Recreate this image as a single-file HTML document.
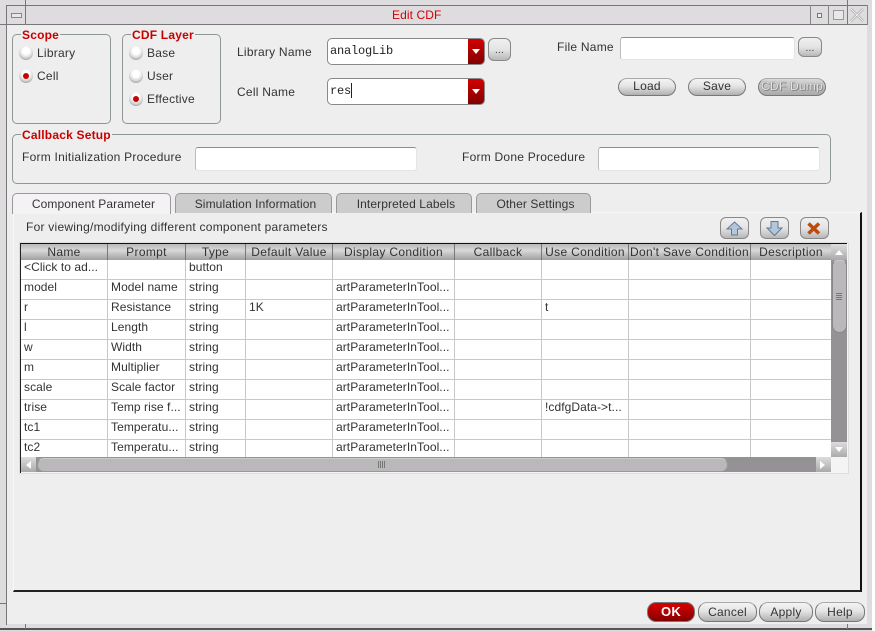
<!DOCTYPE html>
<html><head><meta charset="utf-8"><title>Edit CDF</title>
<style>
*{box-sizing:border-box}
html,body{margin:0;padding:0;background:#fff}
body{width:875px;height:631px;position:relative;overflow:hidden;font:12px "Liberation Sans",sans-serif;color:#333;letter-spacing:.24px}
.a,.t{position:absolute}
.t{white-space:nowrap;line-height:14px}
.grp{position:absolute;border:1px solid #8f9795;border-radius:5px}
.lg{position:absolute;background:#eee;color:#c80000;font-weight:bold;font-size:12px;line-height:14px;padding:0 1px;white-space:nowrap;letter-spacing:.2px}
.in{position:absolute;background:#fff;border:1px solid #e4e4e4;border-top:1px solid #8a8f8d;border-left:1px solid #bbb;border-radius:3px}
.combo{position:absolute;background:#fff;border:1px solid #888;border-radius:5px;overflow:hidden;font:12px "Liberation Mono",monospace;letter-spacing:-.2px;color:#222;line-height:24px;padding-left:2px}
.combo i{position:absolute;right:0;top:0;width:16px;height:100%;background:linear-gradient(#d40000,#800000)}
.combo i:after{content:"";position:absolute;left:4px;top:10px;border:4px solid transparent;border-top:5px solid #fff;border-bottom:0}
.r{position:absolute;width:14px;height:14px;border-radius:50%;background:radial-gradient(circle at 50% 35%,#fff 30%,#d8d8d8 58%,#777 100%)}
.r.on:after{content:"";position:absolute;left:4px;top:4px;width:6px;height:6px;border-radius:50%;background:#c80000}
.b{position:absolute;height:18px;border:1px solid #777;border-top-color:#aaa;border-radius:9px;background:linear-gradient(#f4f4f4,#e4e4e4 45%,#b0b0b0);text-align:center;line-height:15px;white-space:nowrap}
.sq{position:absolute;border:1px solid #888;border-radius:6px;background:linear-gradient(#f0f0f0,#e4e4e4 50%,#b8b8b8);text-align:center;line-height:16px;font-size:10px}
.tab{position:absolute;top:193px;height:20px;border:1px solid #999;border-bottom:0;border-radius:5px 5px 0 0;background:#ccc;text-align:center;line-height:21px;white-space:nowrap;letter-spacing:.1px;padding-left:4px}
.hd{position:absolute;top:244px;height:16px;background:linear-gradient(#b8b8b8,#d8d8d8 40%,#a0a0a0);text-align:center;line-height:16px;white-space:nowrap;border-right:1px solid #777;letter-spacing:.33px}
.cell{position:absolute;white-space:nowrap;line-height:14px;letter-spacing:.07px}
.hl{position:absolute;left:21px;width:810px;height:1px;background:#c8c8c8}
.vl{position:absolute;top:260px;height:197px;width:1px;background:#c8c8c8}
</style></head><body>
<!-- window frame -->
<div class="a" style="left:0;top:0;width:872px;height:631px;background:#dedcdf"></div>
<div class="a" style="left:872px;top:0;width:3px;height:631px;background:#fff"></div>
<div class="a" style="left:6px;top:25px;width:861px;height:599px;background:#eee"></div>
<div class="a" style="left:7px;top:6px;width:860px;height:18px;background:#dedcdf"></div>
<div class="a" style="left:6px;top:5px;width:861px;height:1px;background:#777"></div>
<div class="a" style="left:0;top:24px;width:867px;height:1px;background:#777"></div>
<div class="a" style="left:6px;top:5px;width:1px;height:620px;background:#777"></div>
<div class="a" style="left:25px;top:0;width:1px;height:24px;background:#777"></div>
<div class="a" style="left:0;top:628px;width:872px;height:2px;background:#555"></div>
<div class="a" style="left:25px;top:624px;width:1px;height:5px;background:#777"></div>
<div class="a" style="left:847px;top:624px;width:1px;height:5px;background:#777"></div>
<div class="a" style="left:0;top:603px;width:6px;height:1px;background:#777"></div>
<div class="a" style="left:867px;top:603px;width:5px;height:1px;background:#777"></div>
<div class="a" style="left:867px;top:25px;width:5px;height:600px;background:#dedcdf"></div>
<div class="a" style="left:11px;top:13px;width:11px;height:5px;border:1px solid #888;background:#e8e8e8"></div>
<div class="a" style="left:810px;top:5px;width:1px;height:19px;background:#888"></div>
<div class="a" style="left:828px;top:5px;width:1px;height:19px;background:#888"></div>
<div class="a" style="left:847px;top:0;width:1px;height:24px;background:#777"></div>
<div class="a" style="left:867px;top:5px;width:1px;height:20px;background:#888"></div>
<div class="a" style="left:817px;top:13px;width:5px;height:5px;border:1px solid #777;background:#eee"></div>
<div class="a" style="left:833px;top:10px;width:11px;height:10px;border:1px solid #999;background:#e8e8e8"></div>
<svg class="a" style="left:850px;top:8px" width="14" height="14"><path d="M1 1L13 13M13 1L1 13" stroke="#aaa" stroke-width="2.500" fill="none"/><path d="M1 1L13 13M13 1L1 13" stroke="#eee" stroke-width="1" fill="none"/></svg>
<div class="t" style="left:392px;top:8px;color:#d40000;font-size:12px;letter-spacing:.1px">Edit CDF</div>

<!-- Scope -->
<div class="grp" style="left:12px;top:34px;width:99px;height:90px"></div>
<div class="lg" style="left:21px;top:28px">Scope</div>
<div class="r" style="left:19px;top:46px"></div><div class="t" style="left:37px;top:46px">Library</div>
<div class="r on" style="left:19px;top:69px"></div><div class="t" style="left:37px;top:69px">Cell</div>
<!-- CDF Layer -->
<div class="grp" style="left:122px;top:34px;width:99px;height:90px"></div>
<div class="lg" style="left:131px;top:28px">CDF Layer</div>
<div class="r" style="left:129px;top:46px"></div><div class="t" style="left:147px;top:46px">Base</div>
<div class="r" style="left:129px;top:69px"></div><div class="t" style="left:147px;top:69px">User</div>
<div class="r on" style="left:129px;top:92px"></div><div class="t" style="left:147px;top:92px">Effective</div>

<div class="t" style="left:237px;top:45px">Library Name</div>
<div class="t" style="left:237px;top:85px">Cell Name</div>
<div class="combo" style="left:327px;top:38px;width:158px;height:27px">analogLib<i></i></div>
<div class="combo" style="left:327px;top:78px;width:158px;height:27px">res<span style="border-left:1px solid #222;display:inline-block;height:15px;vertical-align:middle"></span><i></i></div>
<div class="sq" style="left:488px;top:38px;width:23px;height:23px;line-height:24px">...</div>
<div class="t" style="left:557px;top:40px">File Name</div>
<div class="in" style="left:620px;top:37px;width:175px;height:23px"></div>
<div class="sq" style="left:798px;top:37px;width:24px;height:20px;line-height:22px">...</div>
<div class="b" style="left:618px;top:78px;width:58px">Load</div>
<div class="b" style="left:688px;top:78px;width:58px">Save</div>
<div class="b" style="left:758px;top:78px;width:68px;color:#e4e4e4;text-shadow:1px 1px 0 #888,0 0 1px #555;background:linear-gradient(#d8d8d8,#aaa)">CDF Dump</div>

<!-- Callback -->
<div class="grp" style="left:12px;top:134px;width:819px;height:50px"></div>
<div class="lg" style="left:21px;top:128px">Callback Setup</div>
<div class="t" style="left:22px;top:150px">Form Initialization Procedure</div>
<div class="in" style="left:195px;top:147px;width:222px;height:24px"></div>
<div class="t" style="left:462px;top:150px">Form Done Procedure</div>
<div class="in" style="left:598px;top:147px;width:222px;height:24px"></div>

<!-- Tab panel -->
<div class="a" style="left:13px;top:212px;width:849px;height:380px;background:#eee;border-top:1px solid #f8f8f8;border-left:1px solid #f8f8f8;border-right:2px solid #111;border-bottom:2px solid #222"></div>
<div class="tab" style="left:12px;width:159px;background:#f4f2f4;height:21px;z-index:2">Component Parameter</div>
<div class="tab" style="left:175px;width:157px;">Simulation Information</div>
<div class="tab" style="left:336px;width:136px;">Interpreted Labels</div>
<div class="tab" style="left:476px;width:115px;">Other Settings</div>
<div class="t" style="left:26px;top:220px">For viewing/modifying different component parameters</div>
<div class="sq" style="left:720px;top:217px;width:29px;height:22px"></div>
<div class="sq" style="left:760px;top:217px;width:29px;height:22px"></div>
<div class="sq" style="left:800px;top:217px;width:29px;height:22px"></div>
<svg class="a" style="left:720px;top:217px" width="110" height="22"><path d="M14.500 5L22 12H17.500V18H11.500V12H7Z" fill="#b4c6d8" stroke="#5b7c9c"/><path d="M51 4.500H58V11H62L54.500 18.500 47 11H51Z" fill="#b4c6d8" stroke="#5b7c9c"/><path d="M88.500 6.500L99 16.500M99 6.500L88.500 16.500" stroke="#c24a08" stroke-width="3.500"/></svg>

<!-- Table -->
<div class="a" style="left:19px;top:242px;width:830px;height:232px;background:#f4f4f4;border:1px solid #ddd"></div>
<div class="a" style="left:20px;top:243px;width:827px;height:1px;background:#111"></div>
<div class="a" style="left:20px;top:243px;width:1px;height:230px;background:#222"></div>
<div class="a" style="left:21px;top:260px;width:810px;height:197px;background:#fff"></div>
<div class="hd" style="left:21px;width:87px">Name</div>
<div class="hd" style="left:108px;width:78px">Prompt</div>
<div class="hd" style="left:186px;width:60px">Type</div>
<div class="hd" style="left:246px;width:87px">Default Value</div>
<div class="hd" style="left:333px;width:122px">Display Condition</div>
<div class="hd" style="left:455px;width:87px">Callback</div>
<div class="hd" style="left:542px;width:87px">Use Condition</div>
<div class="hd" style="left:629px;width:122px">Don't Save Condition</div>
<div class="hd" style="left:751px;width:80px;border-right:0">Description</div>
<div class="vl" style="left:107px"></div><div class="vl" style="left:185px"></div><div class="vl" style="left:245px"></div><div class="vl" style="left:332px"></div><div class="vl" style="left:454px"></div><div class="vl" style="left:541px"></div><div class="vl" style="left:628px"></div><div class="vl" style="left:750px"></div>
<div class="hl" style="top:279px"></div><div class="hl" style="top:299px"></div><div class="hl" style="top:319px"></div><div class="hl" style="top:339px"></div><div class="hl" style="top:359px"></div><div class="hl" style="top:379px"></div><div class="hl" style="top:399px"></div><div class="hl" style="top:419px"></div><div class="hl" style="top:439px"></div>

<div class="cell" style="left:24px;top:260px">&lt;Click to ad...</div><div class="cell" style="left:189px;top:260px">button</div>
<div class="cell" style="left:24px;top:280px">model</div><div class="cell" style="left:111px;top:280px">Model name</div><div class="cell" style="left:189px;top:280px">string</div><div class="cell" style="left:336px;top:280px">artParameterInTool...</div>
<div class="cell" style="left:24px;top:300px">r</div><div class="cell" style="left:111px;top:300px">Resistance</div><div class="cell" style="left:189px;top:300px">string</div><div class="cell" style="left:249px;top:300px">1K</div><div class="cell" style="left:336px;top:300px">artParameterInTool...</div><div class="cell" style="left:545px;top:300px">t</div>
<div class="cell" style="left:24px;top:320px">l</div><div class="cell" style="left:111px;top:320px">Length</div><div class="cell" style="left:189px;top:320px">string</div><div class="cell" style="left:336px;top:320px">artParameterInTool...</div>
<div class="cell" style="left:24px;top:340px">w</div><div class="cell" style="left:111px;top:340px">Width</div><div class="cell" style="left:189px;top:340px">string</div><div class="cell" style="left:336px;top:340px">artParameterInTool...</div>
<div class="cell" style="left:24px;top:360px">m</div><div class="cell" style="left:111px;top:360px">Multiplier</div><div class="cell" style="left:189px;top:360px">string</div><div class="cell" style="left:336px;top:360px">artParameterInTool...</div>
<div class="cell" style="left:24px;top:380px">scale</div><div class="cell" style="left:111px;top:380px">Scale factor</div><div class="cell" style="left:189px;top:380px">string</div><div class="cell" style="left:336px;top:380px">artParameterInTool...</div>
<div class="cell" style="left:24px;top:400px">trise</div><div class="cell" style="left:111px;top:400px">Temp rise f...</div><div class="cell" style="left:189px;top:400px">string</div><div class="cell" style="left:336px;top:400px">artParameterInTool...</div><div class="cell" style="left:545px;top:400px">!cdfgData-&gt;t...</div>
<div class="cell" style="left:24px;top:420px">tc1</div><div class="cell" style="left:111px;top:420px">Temperatu...</div><div class="cell" style="left:189px;top:420px">string</div><div class="cell" style="left:336px;top:420px">artParameterInTool...</div>
<div class="cell" style="left:24px;top:440px">tc2</div><div class="cell" style="left:111px;top:440px">Temperatu...</div><div class="cell" style="left:189px;top:440px">string</div><div class="cell" style="left:336px;top:440px">artParameterInTool...</div>

<!-- Scrollbars -->
<div class="a" style="left:831px;top:244px;width:16px;height:213px;background:#949294"></div>
<div class="a" style="left:831px;top:244px;width:16px;height:16px;background:linear-gradient(#ddd,#aaa)"></div>
<div class="a" style="left:835px;top:250px;border:4px solid transparent;border-bottom:5px solid #fff;border-top:0"></div>
<div class="a" style="left:832px;top:260px;width:15px;height:73px;border-radius:6px 6px 8px 8px;background:#bab8ba;border:1px solid #888;border-top-color:#ccc"></div>
<div class="a" style="left:836px;top:293px;width:6px;height:8px;background:repeating-linear-gradient(#777 0 1px,#bab8ba 1px 2px)"></div>
<div class="a" style="left:831px;top:442px;width:16px;height:15px;background:linear-gradient(#ddd,#aaa)"></div>
<div class="a" style="left:835px;top:447px;border:4px solid transparent;border-top:5px solid #fff;border-bottom:0"></div>
<div class="a" style="left:21px;top:457px;width:810px;height:15px;background:#949294"></div>
<div class="a" style="left:21px;top:457px;width:15px;height:15px;background:linear-gradient(#ddd,#aaa)"></div>
<div class="a" style="left:26px;top:461px;border:4px solid transparent;border-right:5px solid #fff;border-left:0"></div>
<div class="a" style="left:37px;top:458px;width:691px;height:14px;border-radius:7px;background:#bab8ba;border:1px solid #999;border-top-color:#ccc"></div>
<div class="a" style="left:378px;top:461px;width:8px;height:7px;background:repeating-linear-gradient(90deg,#777 0 1px,#bab8ba 1px 2px)"></div>
<div class="a" style="left:816px;top:457px;width:15px;height:15px;background:linear-gradient(#ddd,#aaa)"></div>
<div class="a" style="left:820px;top:461px;border:4px solid transparent;border-left:5px solid #fff;border-right:0"></div>

<!-- Footer buttons -->
<div class="b" style="left:647px;top:602px;width:48px;height:20px;line-height:18px;background:linear-gradient(#d80000,#a00000 70%,#800000);color:#fff;font-weight:bold;font-size:13px;border-color:#777">OK</div>
<div class="b" style="left:698px;top:602px;width:59px;height:20px;line-height:18px">Cancel</div>
<div class="b" style="left:759px;top:602px;width:54px;height:20px;line-height:18px">Apply</div>
<div class="b" style="left:815px;top:602px;width:50px;height:20px;line-height:18px">Help</div>
</body></html>
